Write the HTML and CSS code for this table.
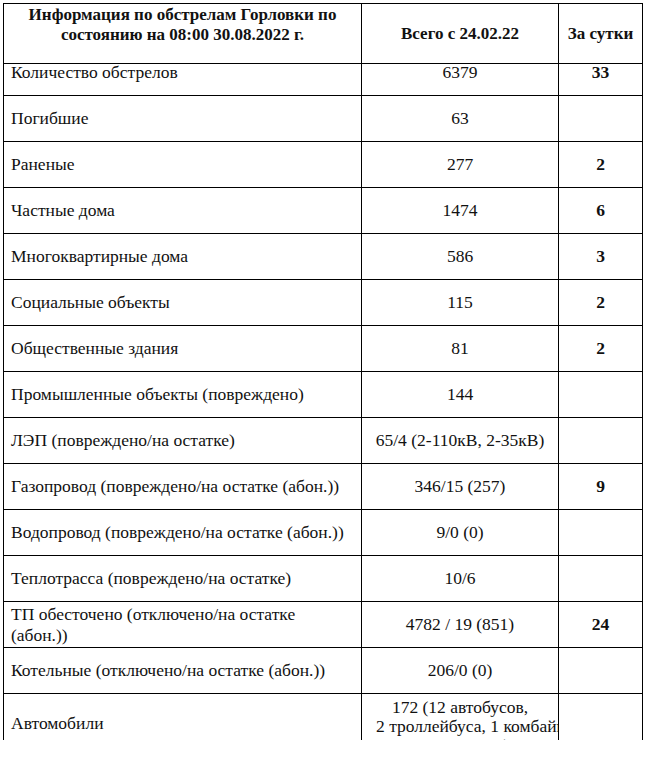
FILE: index.html
```html
<!DOCTYPE html>
<html>
<head>
<meta charset="utf-8">
<title>Report</title>
<link rel="stylesheet" href="styles.css">
</head>
<body>
<div class="report">
  <div class="cell head head-title">Информация по обстрелам Горловки по состоянию на 08:00 30.08.2022 г.</div>
  <div class="cell head center">Всего с 24.02.22</div>
  <div class="cell head center">За сутки</div>

  <div class="cell name">Количество обстрелов</div><div class="cell center">6379</div><div class="cell center strong">33</div>
  <div class="cell name">Погибшие</div><div class="cell center">63</div><div class="cell center strong"></div>
  <div class="cell name">Раненые</div><div class="cell center">277</div><div class="cell center strong">2</div>
  <div class="cell name">Частные дома</div><div class="cell center">1474</div><div class="cell center strong">6</div>
  <div class="cell name">Многоквартирные дома</div><div class="cell center">586</div><div class="cell center strong">3</div>
  <div class="cell name">Социальные объекты</div><div class="cell center">115</div><div class="cell center strong">2</div>
  <div class="cell name">Общественные здания</div><div class="cell center">81</div><div class="cell center strong">2</div>
  <div class="cell name">Промышленные объекты (повреждено)</div><div class="cell center">144</div><div class="cell center strong"></div>
  <div class="cell name">ЛЭП (повреждено/на остатке)</div><div class="cell center">65/4 (2-110кВ, 2-35кВ)</div><div class="cell center strong"></div>
  <div class="cell name">Газопровод (повреждено/на остатке (абон.))</div><div class="cell center">346/15 (257)</div><div class="cell center strong">9</div>
  <div class="cell name">Водопровод (повреждено/на остатке (абон.))</div><div class="cell center">9/0 (0)</div><div class="cell center strong"></div>
  <div class="cell name">Теплотрасса (повреждено/на остатке)</div><div class="cell center">10/6</div><div class="cell center strong"></div>
  <div class="cell name">ТП обесточено (отключено/на остатке (абон.))</div><div class="cell center">4782 / 19 (851)</div><div class="cell center strong">24</div>
  <div class="cell name">Котельные (отключено/на остатке (абон.))</div><div class="cell center">206/0 (0)</div><div class="cell center strong"></div>
  <div class="cell name last">Автомобили</div>
  <div class="cell clip last">
    <div class="clip-line">172 (12 автобусов,</div>
    <div class="clip-line clip-wide">2 троллейбуса, 1 комбайн,</div>
    <div class="clip-line">1 экскаватор)</div>
  </div>
  <div class="cell center strong last"></div>
</div>
</body>
</html>
```
FILE: styles.css
```css
body {
  margin: 3px 0 0 3px;
  font-family: "Liberation Serif", "Times New Roman", serif;
  font-size: 17.5px;
  color: #111;
  background: #fff;
}

.report {
  display: grid;
  grid-template-columns: 358px 197px 84px;
  grid-auto-rows: 46px;
  width: max-content;
  border-top: 1px solid #000;
  border-left: 1px solid #000;
}

.cell {
  box-sizing: border-box;
  border-right: 1px solid #000;
  border-bottom: 1px solid #000;
  display: flex;
  align-items: center;
  line-height: 21px;
  font-family: "Liberation Serif", "Times New Roman", serif;
}

.head {
  height: 60px;
  font-weight: bold;
  font-size: 17px;
}

.head-title {
  align-items: flex-start;
  justify-content: center;
  text-align: center;
  padding: 1px 8px 0;
  line-height: 20px;
}

.name {
  padding: 0 7px;
  text-align: left;
}

.center {
  justify-content: center;
  text-align: center;
  padding: 0 7px;
}

.strong {
  font-weight: bold;
}

.last {
  height: 60px;
}

.clip {
  display: block;
  padding-top: 4px;
  line-height: 19px;
  overflow-x: clip;
  overflow-y: visible;
}

.clip-line {
  white-space: nowrap;
  text-align: center;
}

.clip-wide {
  text-align: left;
  padding-left: 14px;
}
```
